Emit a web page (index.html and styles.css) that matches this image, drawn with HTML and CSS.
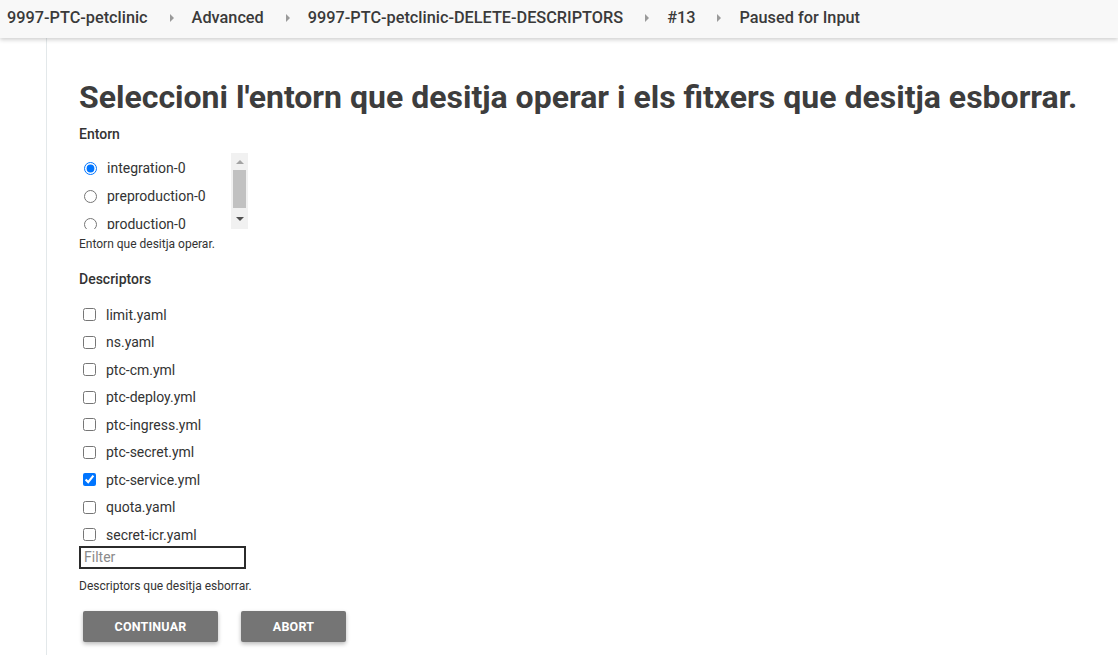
FILE: index.html
```html
<!DOCTYPE html>
<html>
<head>
<meta charset="utf-8">
<link rel="stylesheet" href="styles.css">
</head>
<body>
<header class="topbar">
  <nav class="crumbs">
    <span class="crumb">9997-PTC-petclinic</span>
    <span class="sep"></span>
    <span class="crumb">Advanced</span>
    <span class="sep"></span>
    <span class="crumb">9997-PTC-petclinic-DELETE-DESCRIPTORS</span>
    <span class="sep"></span>
    <span class="crumb">#13</span>
    <span class="sep"></span>
    <span class="crumb">Paused for Input</span>
  </nav>
</header>
<div class="layout">
  <aside class="side"></aside>
  <main class="content">
    <h1 class="title">Seleccioni l'entorn que desitja operar i els fitxers que desitja esborrar.</h1>

    <div class="field">
      <div class="label">Entorn</div>
      <div class="radio-box">
        <div class="radio-list">
          <label class="opt radio"><input type="radio" name="env" checked><span>integration-0</span></label>
          <label class="opt radio"><input type="radio" name="env"><span>preproduction-0</span></label>
          <label class="opt radio"><input type="radio" name="env"><span>production-0</span></label>
        </div>
        <div class="scrollbar">
          <span class="arrow-up"></span>
          <span class="thumb"></span>
          <span class="arrow-down"></span>
        </div>
      </div>
      <div class="help">Entorn que desitja operar.</div>
    </div>

    <div class="field">
      <div class="label desc-label">Descriptors</div>
      <div class="check-list">
        <label class="opt check"><input type="checkbox"><span>limit.yaml</span></label>
        <label class="opt check"><input type="checkbox"><span>ns.yaml</span></label>
        <label class="opt check"><input type="checkbox"><span>ptc-cm.yml</span></label>
        <label class="opt check"><input type="checkbox"><span>ptc-deploy.yml</span></label>
        <label class="opt check"><input type="checkbox"><span>ptc-ingress.yml</span></label>
        <label class="opt check"><input type="checkbox"><span>ptc-secret.yml</span></label>
        <label class="opt check"><input type="checkbox" checked><span>ptc-service.yml</span></label>
        <label class="opt check"><input type="checkbox"><span>quota.yaml</span></label>
        <label class="opt check"><input type="checkbox"><span>secret-icr.yaml</span></label>
      </div>
      <input class="filter" type="text" placeholder="Filter">
      <div class="help help-desc">Descriptors que desitja esborrar.</div>
    </div>

    <div class="actions">
      <button class="btn btn-continue">Continuar</button>
      <button class="btn btn-abort">Abort</button>
    </div>
  </main>
</div>
</body>
</html>
```
FILE: styles.css
```css
html, body {
  margin: 0;
  padding: 0;
  background: #ffffff;
  font-family: Roboto, "Liberation Sans", sans-serif;
  color: #333333;
}

.topbar {
  height: 38px;
  background: #f8f8f8;
  box-shadow: 0 2px 4px rgba(0, 0, 0, 0.18);
  position: relative;
  z-index: 2;
}

.crumbs {
  display: flex;
  align-items: center;
  height: 35px;
  padding-left: 7px;
}

.crumb {
  font-size: 16.3px;
  font-weight: 500;
  color: #3a3a3a;
  white-space: nowrap;
}

.sep {
  width: 0;
  height: 0;
  border-top: 4px solid transparent;
  border-bottom: 4px solid transparent;
  border-left: 4px solid #9a9a9a;
  margin: 0 18px 0 22px;
}

.layout {
  display: flex;
  min-height: 617px;
}

.side {
  width: 46px;
  border-right: 1px solid #e3e8ea;
  flex: none;
}

.content {
  padding-left: 32px;
  padding-top: 40px;
}

.title {
  margin: 0 0 9px 0;
  font-size: 32px;
  font-weight: 700;
  line-height: 38px;
  color: #3d3d3d;
  white-space: nowrap;
}

.label {
  font-size: 14px;
  font-weight: 500;
  line-height: 18px;
  color: #333333;
}

.radio-box {
  display: flex;
  width: 169px;
  height: 76px;
  margin-top: 10px;
}

.radio-list {
  flex: 1;
  overflow: hidden;
  padding-top: 1px;
}

.scrollbar {
  width: 17px;
  flex: none;
  background: #f1f1f1;
  display: flex;
  flex-direction: column;
  align-items: center;
  padding: 7px 0 8px 0;
  box-sizing: border-box;
}

.arrow-up {
  width: 0;
  height: 0;
  border-left: 4px solid transparent;
  border-right: 4px solid transparent;
  border-bottom: 4px solid #a3a3a3;
}

.thumb {
  width: 13px;
  height: 38px;
  background: #c1c1c1;
  margin-top: 6px;
}

.arrow-down {
  width: 0;
  height: 0;
  margin-top: auto;
  border-left: 4px solid transparent;
  border-right: 4px solid transparent;
  border-top: 4px solid #505050;
}

.opt {
  display: flex;
  align-items: center;
  font-size: 14px;
  color: #333333;
}

.opt span {
  margin-left: 7px;
}

.radio {
  height: 28px;
  flex: none;
}

.radio input {
  margin: 0 3px 0 5px;
}

.help {
  font-size: 12px;
  line-height: 16px;
  color: #333333;
  margin-top: 7px;
}

.desc-label {
  margin-top: 18px;
}

.check-list {
  margin-top: 13px;
}

.check {
  height: 27.5px;
}

.check input {
  margin: 0 3px 0 4px;
}

.filter {
  display: block;
  box-sizing: border-box;
  width: 167px;
  height: 23px;
  margin: -3px 0 0 0;
  padding: 1px 3px;
  border: 2px solid #2b2b2b;
  font-family: Roboto, "Liberation Sans", sans-serif;
  font-size: 14px;
  color: #333;
  outline: none;
}

.filter::placeholder {
  color: #8a8a8a;
}

.help-desc {
  margin-top: 9px;
}

.actions {
  display: flex;
  gap: 23px;
  margin-top: 17px;
  padding-left: 4px;
}

.btn {
  height: 31px;
  border: none;
  border-radius: 2px;
  background: #757575;
  color: #ffffff;
  font-family: Roboto, "Liberation Sans", sans-serif;
  font-size: 12.5px;
  font-weight: 700;
  text-transform: uppercase;
  box-shadow: 0 2px 4px rgba(0, 0, 0, 0.28);
  letter-spacing: 0.2px;
}

.btn-continue {
  width: 135px;
}

.btn-abort {
  width: 105px;
}
```
